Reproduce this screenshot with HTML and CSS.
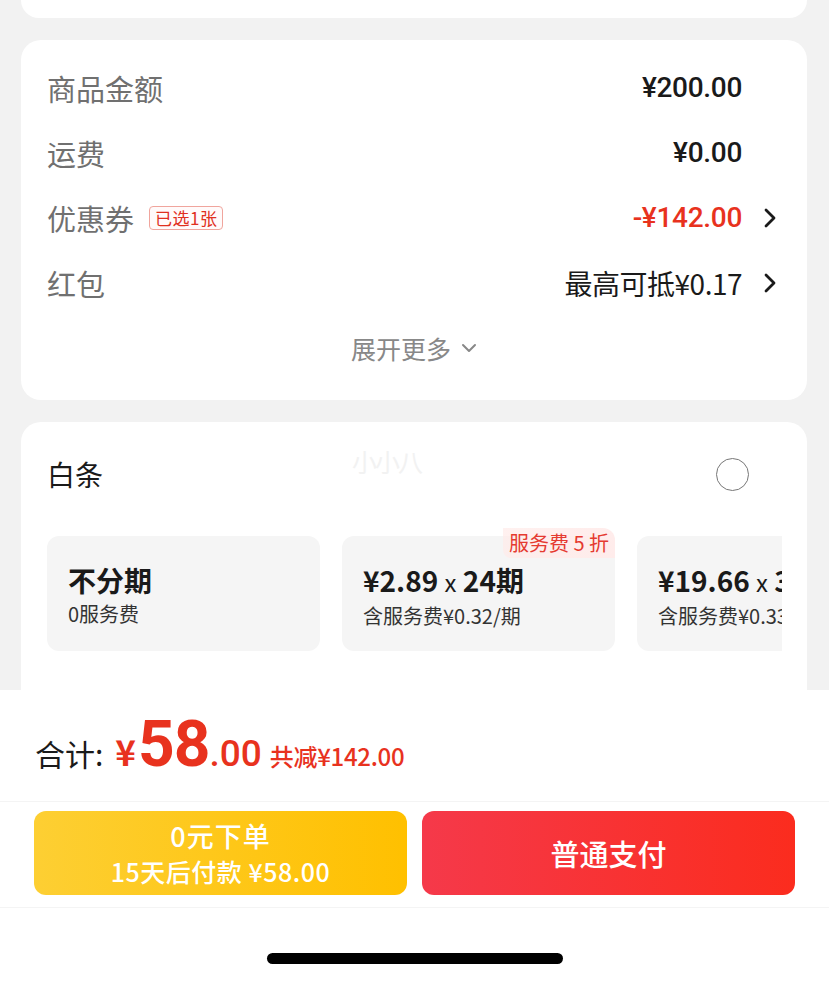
FILE: index.html
```html
<!DOCTYPE html>
<html lang="zh-CN">
<head>
<meta charset="utf-8">
<link rel="stylesheet" href="styles.css">
</head>
<body>
<div class="page">
  <div class="main">
    <div class="card card-top"></div>
    <div class="card card-sum">
      <div class="row"><span class="label">商品金额</span><span class="value">¥200.00</span></div>
      <div class="row"><span class="label">运费</span><span class="value">¥0.00</span></div>
      <div class="row"><span class="label">优惠券<span class="tag">已选1张</span></span><span class="value red">-¥142.00</span><svg class="chev" viewBox="0 0 14 20"><polyline points="3,2 11,10 3,18" fill="none" stroke="#1a1a1a" stroke-width="2.8" stroke-linecap="round" stroke-linejoin="round"/></svg></div>
      <div class="row"><span class="label">红包</span><span class="value dark">最高可抵¥0.17</span><svg class="chev" viewBox="0 0 14 20"><polyline points="3,2 11,10 3,18" fill="none" stroke="#1a1a1a" stroke-width="2.8" stroke-linecap="round" stroke-linejoin="round"/></svg></div>
      <div class="more">展开更多<svg class="down" viewBox="0 0 16 10"><polyline points="2,2 8,8 14,2" fill="none" stroke="#888" stroke-width="2" stroke-linecap="round" stroke-linejoin="round"/></svg></div>
    </div>
    <div class="card card-bt">
      <div class="bt-head">
        <span class="bt-title">白条</span>
        <span class="wm">小小八</span>
        <span class="radio"></span>
      </div>
      <div class="plans">
        <div class="plan">
          <div class="plan-title">不分期</div>
          <div class="plan-sub">0服务费</div>
        </div>
        <div class="plan">
          <span class="badge">服务费 5 折</span>
          <div class="plan-title">¥2.89 <span class="x">x</span> 24期</div>
          <div class="plan-sub">含服务费¥0.32/期</div>
        </div>
        <div class="plan">
          <div class="plan-title">¥19.66 <span class="x">x</span> 3期</div>
          <div class="plan-sub">含服务费¥0.33/期</div>
        </div>
      </div>
    </div>
  </div>
  <div class="bottom">
    <div class="total">
      <span class="t-label">合计:</span>
      <span class="t-yen">¥</span><span class="t-int">58</span><span class="t-dec">.00</span>
      <span class="t-save">共减¥142.00</span>
    </div>
    <div class="btns">
      <div class="btn btn-yellow">
        <span class="b1">0元下单</span>
        <span class="b2">15天后付款 ¥58.00</span>
      </div>
      <div class="btn btn-red">普通支付</div>
    </div>
    <div class="home"><span class="indicator"></span></div>
  </div>
</div>
</body>
</html>
```

FILE: styles.css
```css
* { box-sizing: border-box; }
html, body { margin: 0; padding: 0; }
body {
  width: 829px;
  height: 981px;
  overflow: hidden;
  background: #f2f2f2;
  font-family: "Noto Sans CJK SC", "Noto Sans", Roboto, sans-serif;
  color: #1a1a1a;
}
.page {
  height: 981px;
  display: flex;
  flex-direction: column;
}
.main {
  height: 690px;
  overflow: hidden;
  padding: 0 22px 0 21px;
  display: flex;
  flex-direction: column;
  gap: 22px;
}
.card {
  background: #fff;
  border-radius: 20px;
  flex-shrink: 0;
}
.card-top {
  height: 18px;
  border-radius: 0 0 20px 20px;
}
.card-sum {
  height: 360px;
  padding: 15px 26px 20px 26px;
}
.row {
  height: 65px;
  display: flex;
  align-items: center;
}
.label {
  font-size: 29px;
  color: #707070;
  flex: 1;
  display: flex;
  align-items: center;
  line-height: 40px;
}
.tag {
  margin-left: 15px;
  font-size: 17px;
  color: #e0301e;
  border: 1px solid #f0a59d;
  border-radius: 4px;
  padding: 0 5px;
  line-height: 22px;
  height: 24px;
  background: #fffafa;
  letter-spacing: 0.5px;
}
.value {
  font-size: 28px;
  font-weight: 500;
  color: #1a1a1a;
  margin-right: 39px;
  font-family: Roboto, "Noto Sans CJK SC", sans-serif;
  letter-spacing: -0.3px;
}
.value.dark { font-weight: 400; font-size: 28px; font-family: "Noto Sans CJK SC", Roboto, sans-serif; letter-spacing: -0.5px; }
.red { color: #e8321e; }
.chev {
  width: 14px;
  height: 20px;
  margin-right: 4px;
}
.row:has(.chev) .value { margin-right: 21px; }
.more {
  height: 65px;
  display: flex;
  align-items: center;
  justify-content: center;
  font-size: 25px;
  color: #888;
  gap: 10px;
}
.down { width: 16px; height: 10px; }

.card-bt {
  padding: 19px 25px 0 26px;
  border-radius: 20px 20px 0 0;
  flex: 1;
}
.bt-head {
  height: 66px;
  display: flex;
  align-items: center;
  position: relative;
}
.bt-title {
  font-size: 28px;
  color: #1a1a1a;
  flex: 1;
}
.wm {
  position: absolute;
  left: 305px;
  top: 2px;
  font-size: 25px;
  color: #f2f2f2;
  letter-spacing: -2px;
}
.radio {
  width: 33px;
  height: 33px;
  border: 1.5px solid #777;
  border-radius: 50%;
  margin-right: 33px;
}
.plans {
  margin-top: 19px;
  padding-top: 10px;
  display: flex;
  gap: 22px;
  width: 735px;
  overflow: hidden;
}
.plan {
  flex: 0 0 273px;
  height: 115px;
  background: #f5f5f5;
  border-radius: 12px;
  padding: 25px 0 0 21px;
  position: relative;
  white-space: nowrap;
}
.plan-title {
  font-size: 28px;
  font-weight: 700;
  line-height: 38px;
  color: #1a1a1a;
}
.plan-title .x { font-weight: 400; font-size: 24px; }
.plan-sub {
  font-size: 20px;
  color: #333;
  line-height: 28px;
  margin-top: 1px;
}
.badge {
  position: absolute;
  right: 0;
  top: -8px;
  height: 30px;
  padding: 0 6px 0 6px;
  line-height: 30px;
  font-size: 20px;
  color: #e53a30;
  background: linear-gradient(90deg, rgba(255,235,233,0.7), #ffeceb);
  border-radius: 0 12px 0 8px;
}

.bottom {
  flex: 1;
  background: #fff;
  display: flex;
  flex-direction: column;
}
.total {
  height: 112px;
  border-bottom: 1px solid #f4f4f4;
  display: flex;
  align-items: baseline;
  padding: 15px 0 0 35px;
  line-height: 80px;
}
.t-label { font-size: 30px; color: #1a1a1a; margin-right: 12px; }
.t-yen { font-size: 35px; color: #e8321e; font-weight: 600; margin-right: 2px; }
.t-int { font-size: 64px; color: #e8321e; font-weight: 700; font-family: Roboto, sans-serif; letter-spacing: -1px; }
.t-dec { font-size: 37px; color: #e8321e; font-weight: 500; font-family: Roboto, sans-serif; }
.t-save { font-size: 24px; color: #e8321e; margin-left: 8px; font-weight: 500; letter-spacing: -0.3px; }
.btns {
  height: 106px;
  display: flex;
  gap: 15px;
  padding: 9px 34px 0 34px;
  border-bottom: 1px solid #f4f4f4;
}
.btn {
  flex: 1;
  height: 84px;
  border-radius: 12px;
  color: #fff;
  display: flex;
  flex-direction: column;
  align-items: center;
  justify-content: center;
}
.btn-yellow {
  background: linear-gradient(90deg, #fdcf33, #ffc000);
}
.b1 { font-size: 27px; line-height: 36px; font-weight: 500; letter-spacing: 1px; }
.b2 { font-size: 25px; line-height: 34px; font-weight: 500; letter-spacing: 0.5px; }
.btn-red {
  background: linear-gradient(90deg, #f5394a, #fb2c1e);
  font-size: 29px;
  font-weight: 500;
}
.home {
  flex: 1;
  display: flex;
  justify-content: center;
  padding-top: 45px;
}
.indicator {
  width: 296px;
  height: 11px;
  border-radius: 6px;
  background: #000;
}
```
